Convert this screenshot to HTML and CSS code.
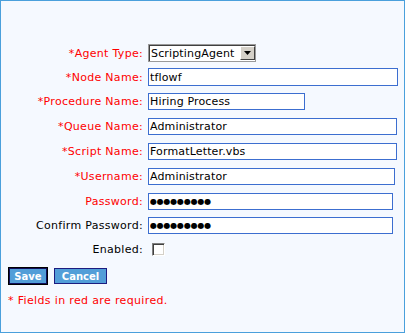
FILE: index.html
```html
<!DOCTYPE html>
<html lang="en">

<head>
    <meta charset="UTF-8">
    <meta name="viewport" content="width=device-width, initial-scale=1.0">
    <title>Agent Properties</title>
    <link rel="stylesheet" href="styles.css">
</head>

<body>

    <!-- agent form -->
    <div class="panel">
        <form class="agentForm">

            <label class="req" for="agentType">*Agent Type:</label>
            <div class="field">
                <span class="selectWrap">
                    <select id="agentType">
                        <option>ScriptingAgent</option>
                    </select>
                    <span class="dropBtn">
                        <svg width="7" height="4" viewBox="0 0 7 4"><path d="M0 0H7L3.5 4Z" fill="#000"/></svg>
                    </span>
                </span>
            </div>

            <label class="req" for="nodeName">*Node Name:</label>
            <div class="field"><input id="nodeName" class="box node" type="text" value="tflowf"></div>

            <label class="req" for="procName">*Procedure Name:</label>
            <div class="field"><input id="procName" class="box short" type="text" value="Hiring Process"></div>

            <label class="req" for="queueName">*Queue Name:</label>
            <div class="field"><input id="queueName" class="box wide" type="text" value="Administrator"></div>

            <label class="req" for="scriptName">*Script Name:</label>
            <div class="field"><input id="scriptName" class="box wide" type="text" value="FormatLetter.vbs"></div>

            <label class="req" for="userName">*Username:</label>
            <div class="field"><input id="userName" class="box user" type="text" value="Administrator"></div>

            <label class="req" for="password">Password:</label>
            <div class="field"><input id="password" class="box pass" type="text" value="●●●●●●●●●"></div>

            <label for="confirm">Confirm Password:</label>
            <div class="field"><input id="confirm" class="box pass" type="text" value="●●●●●●●●●"></div>

            <label for="enabled">Enabled:</label>
            <div class="field"><input id="enabled" class="check" type="checkbox"></div>

        </form>

        <div class="buttons">
            <button class="btn save" type="button">Save</button>
            <button class="btn cancel" type="button">Cancel</button>
        </div>

        <p class="note">* Fields in red are required.</p>
    </div>

</body>

</html>
```

FILE: styles.css
```css
body {
    margin: 0;
    font-family: "DejaVu Sans", Verdana, sans-serif;
    font-size: 11px;
}

.panel {
    box-sizing: border-box;
    height: 333px;
    border: 1px solid #4aa0dc;
    background-color: #f5f9ff;
    padding: 40px 7px 0 7px;
}

.agentForm {
    display: grid;
    grid-template-columns: 135px 1fr;
    grid-template-rows: 24px 24px 25px 25px 25px 25px 24px 24px 25px;
    column-gap: 5px;
    align-items: center;
}

label {
    text-align: right;
    color: #000;
    white-space: nowrap;
    letter-spacing: 0.3px;
}

label.req {
    color: #ff0000;
}

.field {
    display: flex;
    align-items: center;
}

.box {
    box-sizing: border-box;
    height: 17px;
    margin: 0;
    padding: 0 1px;
    border: 1px solid #3c6ed0;
    background: #fff;
    font-family: "DejaVu Sans", Verdana, sans-serif;
    font-size: 11px;
    letter-spacing: 0.15px;
    color: #000;
    outline: none;
}

.node {
    width: 250px;
    height: 18px;
}

.short {
    width: 157px;
}

.wide {
    width: 249px;
}

.user {
    width: 247px;
}

.pass {
    width: 245px;
    font-size: 8px;
    letter-spacing: -0.2px;
}

/* dropdown */
.selectWrap {
    position: relative;
    display: inline-block;
    width: 108px;
    height: 18px;
}

.selectWrap select {
    appearance: none;
    box-sizing: border-box;
    width: 108px;
    height: 18px;
    margin: 0;
    padding: 0 0 0 2px;
    border: 1px solid #9a9a9a;
    box-shadow: inset 1px 1px #404040;
    background: #fff;
    font-family: "DejaVu Sans", Verdana, sans-serif;
    font-size: 11px;
    letter-spacing: 0.15px;
    color: #000;
    border-radius: 0;
}

.dropBtn {
    position: absolute;
    top: 2px;
    right: 1px;
    box-sizing: border-box;
    width: 15px;
    height: 14px;
    background: #d4d0c8;
    border-top: 1px solid #fff;
    border-left: 1px solid #fff;
    border-right: 1px solid #404040;
    border-bottom: 1px solid #404040;
    display: flex;
    align-items: center;
    justify-content: center;
    pointer-events: none;
}

.check {
    appearance: none;
    box-sizing: border-box;
    width: 13px;
    height: 13px;
    margin: 0 0 0 4px;
    background: #fff;
    border-top: 1px solid #808080;
    border-left: 1px solid #808080;
    border-right: 1px solid #fff;
    border-bottom: 1px solid #fff;
    box-shadow: inset 1px 1px #404040, inset -1px -1px #d4d0c8;
}

.buttons {
    display: flex;
    gap: 7px;
    margin-top: 6px;
    padding-left: 1px;
}

.btn {
    box-sizing: border-box;
    height: 16px;
    margin: 0;
    padding: 0;
    border: 1px solid #1c1c80;
    background: #529ed8;
    color: #fff;
    font-family: "DejaVu Sans", Verdana, sans-serif;
    font-weight: bold;
    font-size: 10px;
    line-height: 13px;
    cursor: pointer;
}

.save {
    width: 38px;
    border-color: #0f0f5c;
    outline: 1px solid #000;
}

.cancel {
    width: 53px;
}

.note {
    margin: 10px 0 0 0;
    color: #ff0000;
    line-height: 13px;
    letter-spacing: 0.35px;
}
```
